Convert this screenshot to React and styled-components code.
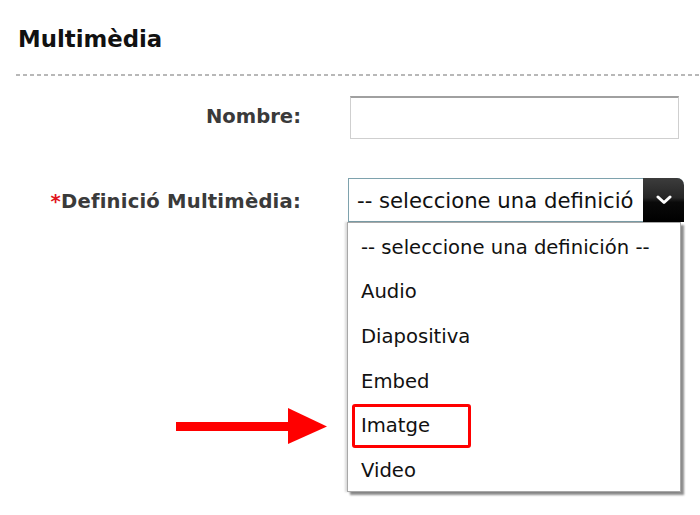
import React from "react";
import styled, { createGlobalStyle } from "styled-components";

const Global = createGlobalStyle`
  html, body { margin: 0; padding: 0; background: #fff; }
  body { font-family: "DejaVu Sans", Verdana, sans-serif; width: 700px; height: 515px; overflow: hidden; }
`;

const Page = styled.div`
  padding: 22px 0 0 16px;
`;

const Title = styled.h1`
  margin: 0 0 0 2px;
  font-size: 22.8px;
  line-height: 34px;
  font-weight: bold;
  color: #111;
`;

const Divider = styled.div`
  margin-top: 18px;
  height: 2px;
  background-image: linear-gradient(to right, #b8b8b8 0 4px, transparent 4px 7px);
  background-size: 7px 2px;
  background-repeat: repeat-x;
`;

const Form = styled.div`
  display: grid;
  grid-template-columns: 285px 336px;
  column-gap: 47px;
  row-gap: 39px;
  margin-top: 20px;
  align-items: center;
`;

const Label = styled.label`
  text-align: right;
  font-size: 19.6px;
  letter-spacing: ${(p) => p.$ls || 0}px;
  font-weight: bold;
  color: #3a3a3a;
  padding-bottom: ${(p) => p.$pb || 0}px;
  padding-top: ${(p) => p.$pt || 0}px;
`;

const Req = styled.span`
  color: #e0141e;
`;

const TextInput = styled.div`
  margin-left: 2px;
  width: 329px;
  height: 43px;
  box-sizing: border-box;
  border: 1px solid #cfcfcf;
  border-top: 2px solid #a0a0a0;
  background: #fff;
`;

const SelectWrap = styled.div`
  position: relative;
  width: 336px;
`;

const SelectBox = styled.div`
  display: flex;
  height: 44px;
  box-sizing: border-box;
  border: 1px solid #7ea2ad;
  border-right: none;
  border-top-right-radius: 7px;
  background: #fff;
`;

const SelectText = styled.div`
  flex: 1;
  overflow: hidden;
  white-space: nowrap;
  font-family: "DejaVu Sans", Tahoma, sans-serif;
  font-size: 21.2px;
  color: #111;
  padding: 9px 0 0 8px;
  text-overflow: clip;
`;

const SelectButton = styled.div`
  width: 41px;
  flex: none;
  margin-top: -1px;
  margin-bottom: -1px;
  display: flex;
  align-items: center;
  justify-content: center;
  border-top-right-radius: 7px;
  background: linear-gradient(to bottom, #3c3c3c 0%, #262626 45%, #0a0a0a 55%, #000 100%);
`;

const Dropdown = styled.ul`
  position: absolute;
  left: -1px;
  top: 44px;
  width: 334px;
  margin: 0;
  padding: 2px 0 0 0;
  list-style: none;
  background: #fff;
  border: 1px solid #a8a8a8;
  box-shadow: 3px 3px 2px rgba(0, 0, 0, 0.45), -2px 0 2px rgba(0, 0, 0, 0.15);
  box-sizing: border-box;
  height: 270px;
  z-index: 2;
`;

const Item = styled.li`
  height: 44.6px;
  display: flex;
  align-items: center;
  padding-left: 13px;
  font-family: "DejaVu Sans", Tahoma, sans-serif;
  font-size: 19.6px;
  color: #111;
`;

const Highlight = styled.span`
  margin-left: -9px;
  padding: 7px 38px 8px 6px;
  border: 3px solid #ff0000;
  border-radius: 3px;
`;

const Arrow = styled.svg`
  position: absolute;
  left: 176px;
  top: 408px;
  z-index: 3;
`;

const items = ["-- seleccione una definición --", "Audio", "Diapositiva", "Embed", "Imatge", "Video"];

export default function App() {
  return (
    <>
      <Global />
      <Page>
        <Title>Multimèdia</Title>
        <Divider />
        <Form>
          <Label $pb={3}>Nombre:</Label>
          <TextInput />
          <Label $pt={3} $ls={0.2}>
            <Req>*</Req>Definició Multimèdia:
          </Label>
          <SelectWrap>
            <SelectBox>
              <SelectText>-- seleccione una definició</SelectText>
              <SelectButton>
                <svg width="16" height="10" viewBox="0 0 16 10">
                  <path d="M2 2 L8 7.5 L14 2" fill="none" stroke="#fff" strokeWidth="3" strokeLinecap="round" strokeLinejoin="round" />
                </svg>
              </SelectButton>
            </SelectBox>
            <Dropdown>
              {items.map((it) => (
                <Item key={it}>{it === "Imatge" ? <Highlight>{it}</Highlight> : it}</Item>
              ))}
            </Dropdown>
          </SelectWrap>
        </Form>
      </Page>
      <Arrow width="151" height="37" viewBox="0 0 151 37">
        <rect x="0" y="14" width="116" height="9" fill="#ff0000" />
        <polygon points="112,0 151,18.5 112,36" fill="#ff0000" />
      </Arrow>
    </>
  );
}
